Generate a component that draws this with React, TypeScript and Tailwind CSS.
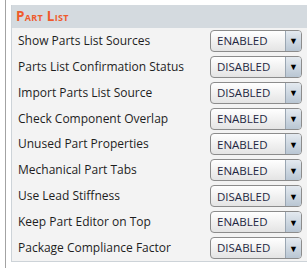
import React from 'react';

type Option = 'ENABLED' | 'DISABLED';

const settings: { label: string; value: Option }[] = [
  { label: 'Show Parts List Sources', value: 'ENABLED' },
  { label: 'Parts List Confirmation Status', value: 'DISABLED' },
  { label: 'Import Parts List Source', value: 'DISABLED' },
  { label: 'Check Component Overlap', value: 'ENABLED' },
  { label: 'Unused Part Properties', value: 'ENABLED' },
  { label: 'Mechanical Part Tabs', value: 'ENABLED' },
  { label: 'Use Lead Stiffness', value: 'DISABLED' },
  { label: 'Keep Part Editor on Top', value: 'ENABLED' },
  { label: 'Package Compliance Factor', value: 'DISABLED' },
];

const Dropdown: React.FC<{ value: Option }> = ({ value }) => (
  <div className="flex h-[22px] w-[92px] overflow-hidden rounded-[4px] border border-[#8c8c8c] bg-linear-to-b from-white to-[#e4e4e4]">
    <span className="flex flex-1 items-center pl-[6px] text-[11.5px] leading-none text-[#1f2742]">{value}</span>
    <span className="flex w-[16px] items-center justify-center border-l border-[#9aa6b2] bg-linear-to-b from-[#e4eaf0] to-[#b9c6d3] text-[9px] leading-none text-black">
      ▼
    </span>
  </div>
);

const App: React.FC = () => {
  return (
    <div className="flex h-[268px] w-[307px] bg-white font-['Open_Sans',sans-serif]">
      <div className="ml-[5px] w-px bg-[#a3a3a3]" />
      <div className="ml-[5px] mt-[5px] flex h-[257px] flex-1 flex-col border-b border-l border-[#cdd3d8] bg-[#f3f3f3]">
        <div className="flex h-[23px] items-center bg-[#d4dadf] pl-[4px]">
          <h2 className="text-[13.5px] font-bold leading-none tracking-[0.3px] text-[#ef5a2c] [font-variant:small-caps]">
            Part List
          </h2>
        </div>
        {settings.map((s) => (
          <div key={s.label} className="flex h-[26px] items-center justify-between pl-[6px] pr-[5px]">
            <span className="text-[12px] leading-none text-[#1e1e1e]">{s.label}</span>
            <Dropdown value={s.value} />
          </div>
        ))}
      </div>
    </div>
  );
};

export default App;
